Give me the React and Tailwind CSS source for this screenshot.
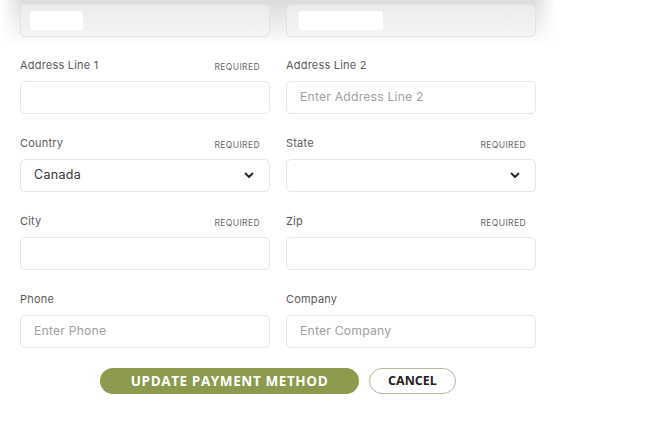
import React from "react";

function Label({ text, required }) {
  return (
    <div className="flex items-end justify-between h-[18px] pb-[2px] pr-[10px]">
      <span className="text-[11px] text-[#5a5a5a] tracking-[0.2px]">{text}</span>
      {required && <span className="text-[8.5px] text-[#666] tracking-[0.4px] mb-[-1px]">REQUIRED</span>}
    </div>
  );
}

function Input({ placeholder, value, select }) {
  return (
    <div className="mt-[6px] h-[33px] border border-[#e6e6e6] rounded-[5px] bg-white flex items-center px-[13px] justify-between">
      <span className={value ? "text-[12.5px] text-[#333] tracking-[0.3px]" : "text-[12.2px] text-[#a0a0a0] tracking-[0.2px]"}>
        {value || placeholder || ""}
      </span>
      {select && (
        <svg width="10" height="7" viewBox="0 0 10 7" className="mr-[2px]">
          <path d="M1.5 1.5 L5 5 L8.5 1.5" fill="none" stroke="#222" strokeWidth="1.8" strokeLinecap="round" strokeLinejoin="round" />
        </svg>
      )}
    </div>
  );
}

function Field(props) {
  return (
    <div className="flex flex-col">
      <Label text={props.label} required={props.required} />
      <Input {...props} />
    </div>
  );
}

export default function App() {
  return (
    <div className="w-[670px] h-[427px] bg-white relative overflow-hidden" style={{ fontFamily: "Inter, 'Open Sans', sans-serif" }}>
      <div className="w-[556px] h-[46px] bg-gradient-to-b from-[#dcdcdc] via-[#ececec] to-white [mask-image:linear-gradient(to_right,transparent,black_4%,black_96%,transparent)] pt-[4px] px-[20px] grid grid-cols-2 gap-x-[16px]">
        <div className="h-[33px] border border-[#e2e2e2] rounded-[5px] bg-gradient-to-b from-[#ebebeb] to-[#f5f5f5] flex items-center pl-[9px]">
          <div className="w-[53px] h-[19px] bg-white rounded-[3px]" />
        </div>
        <div className="h-[33px] border border-[#e2e2e2] rounded-[5px] bg-gradient-to-b from-[#ebebeb] to-[#f5f5f5] flex items-center pl-[12px]">
          <div className="w-[84px] h-[19px] bg-white rounded-[3px]" />
        </div>
      </div>
      <div className="w-[516px] ml-[20px] mt-[11px] grid grid-cols-2 gap-x-[16px] gap-y-[21px]">
        <Field label="Address Line 1" required />
        <Field label="Address Line 2" placeholder="Enter Address Line 2" />
        <Field label="Country" required value="Canada" select />
        <Field label="State" required select />
        <Field label="City" required />
        <Field label="Zip" required />
        <Field label="Phone" placeholder="Enter Phone" />
        <Field label="Company" placeholder="Enter Company" />
      </div>
      <div className="flex ml-[100px] mt-[20px] gap-[10px]" style={{ fontFamily: "'Open Sans', 'Liberation Sans', sans-serif" }}>
        <button className="w-[259px] h-[26px] rounded-full bg-[#8b9a4c] text-white font-bold text-[13.5px] tracking-[0.6px] flex items-center justify-center">UPDATE PAYMENT METHOD</button>
        <button className="w-[87px] h-[26px] rounded-full bg-white border border-[#b7b59a] text-[#222] font-bold text-[12.5px] flex items-center justify-center">CANCEL</button>
      </div>
    </div>
  );
}
